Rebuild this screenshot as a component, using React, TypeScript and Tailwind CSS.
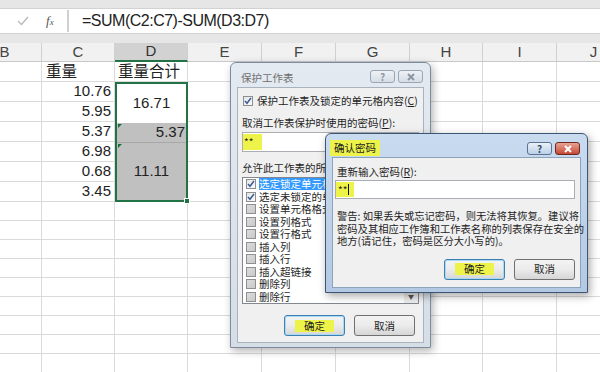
import React from "react";

const cols = ["B", "C", "D", "E", "F", "G", "H", "I", "J"];
const weights: Record<number, string> = { 2: "10.76", 3: "5.95", 4: "5.37", 5: "6.98", 6: "0.68", 7: "3.45" };

const Check = ({ on, gray }: { on?: boolean; gray?: boolean }) => (
  <span
    className={`w-[10px] h-[10px] border border-[#8e8f8f] flex items-center justify-center shrink-0 ${
      gray ? "bg-linear-to-br from-[#dcdcdc] to-[#c9c9c9]" : "bg-linear-to-br from-[#e6e6e6] to-[#fafafa]"
    }`}
  >
    {on && (
      <svg width="8" height="8" viewBox="0 0 8 8">
        <path d="M1 4 L3 6.3 L7 1" stroke="#3a5d9a" strokeWidth="1.5" fill="none" />
      </svg>
    )}
  </span>
);

const Btn = ({ label, def, hl }: { label: string; def?: boolean; hl?: boolean }) => (
  <div
    className={`w-[61px] h-[21px] rounded-[3px] border flex items-center justify-center leading-[12px] bg-linear-to-b from-[#f4f4f4] via-[#ebebeb] to-[#d6d6d6] ${
      def ? "border-[#3c7fb1] shadow-[inset_0_0_0_1px_#a9d9f5]" : "border-[#707070]"
    }`}
  >
    <span className={hl ? "bg-[#eef34a] px-[9px]" : ""}>{label}</span>
  </div>
);

const HelpBtn = ({ active }: { active?: boolean }) => (
  <div
    className={`w-[25px] h-[13px] rounded-[3px] border flex items-center justify-center text-[10px] font-bold leading-none ${
      active
        ? "border-[#5d7391] bg-linear-to-b from-[#e9f1fa] to-[#bcd0e8] text-[#3b4c63]"
        : "border-[#9aa6b4] bg-linear-to-b from-[#eef2f6] to-[#d6dde6] text-[#8c97a4]"
    }`}
  >
    ?
  </div>
);

const CloseBtn = ({ active }: { active?: boolean }) => (
  <div
    className={`w-[25px] h-[13px] rounded-[3px] border flex items-center justify-center ${
      active
        ? "border-[#6e2a22] bg-linear-to-b from-[#e9a393] to-[#c54534]"
        : "border-[#9aa6b4] bg-linear-to-b from-[#eef2f6] to-[#d6dde6]"
    }`}
  >
    <svg width="10" height="8" viewBox="0 0 10 8">
      <path d="M2 1 L8 7 M8 1 L2 7" stroke={active ? "#ffffff" : "#8c97a4"} strokeWidth="2" />
    </svg>
  </div>
);

const Tri = () => (
  <span className="absolute left-[1px] top-[1px] w-0 h-0 border-t-[4px] border-t-[#1e6b3f] border-r-[4px] border-r-transparent" />
);

function DBlock() {
  return (
    <div className="row-span-6 border-2 border-[#217346] flex flex-col relative text-[15px] text-[#222]">
      <div className="h-[39px] bg-white flex items-center justify-center">16.71</div>
      <div className="h-[20px] bg-[#c0c0c0] border-b border-[#a8a8a8] flex items-center justify-end pr-[1px] relative">
        <Tri />
        5.37
      </div>
      <div className="flex-1 bg-[#c0c0c0] flex items-center justify-center relative">
        <Tri />
        11.11
      </div>
      <span className="absolute -right-[4px] -bottom-[4px] w-[6px] h-[6px] bg-[#217346] border border-white" />
    </div>
  );
}

function Sheet() {
  const cells: React.ReactNode[] = [];
  cols.forEach((c) =>
    cells.push(
      <div
        key={"h" + c}
        className={`flex items-center justify-center text-[15px] border-r border-[#d0d0d0] ${
          c === "D" ? "bg-[#d2d2d2] text-[#333] border-b-2 border-b-[#217346]" : "bg-[#f1f1f1] text-[#444] border-b border-b-[#c8c8c8]"
        }`}
      >
        {c}
      </div>
    )
  );
  for (let r = 1; r <= 16; r++) {
    for (let i = 0; i < 9; i++) {
      if (i === 2 && r >= 2 && r <= 7) {
        if (r === 2) cells.push(<DBlock key="dblock" />);
        continue;
      }
      let content: React.ReactNode = null;
      let align = "";
      if (r === 1 && i === 1) {
        content = "重量";
        align = "justify-start pl-[4px] text-[15.5px]";
      } else if (r === 1 && i === 2) {
        content = "重量合计";
        align = "justify-start pl-[3px] text-[15.5px]";
      } else if (i === 1 && weights[r]) {
        content = weights[r];
        align = "justify-end pr-[3px] text-[15px]";
      }
      cells.push(
        <div key={`${r}-${i}`} className={`flex items-center border-r border-b border-[#dadada] bg-white text-[#222] ${align}`}>
          {content}
        </div>
      );
    }
  }
  return (
    <div className="ml-[-32px] grid grid-cols-[74px_73px_73px_74px_74px_74px_73px_74px_74px] grid-rows-[19px_repeat(7,20px)_repeat(9,19px)]">
      {cells}
    </div>
  );
}

const listItems = ["选定锁定单元格", "选定未锁定的单元格", "设置单元格格式", "设置列格式", "设置行格式", "插入列", "插入行", "插入超链接", "删除列", "删除行"];

function ProtectDialog() {
  return (
    <div className="absolute left-[230px] top-[62px] w-[201px] h-[286px] rounded-t-[6px] border border-[#7d8b9b] bg-linear-to-b from-[#e4eaf1] to-[#d5dde7] px-[6px] pb-[4px] flex flex-col shadow-[2px_3px_8px_rgba(0,0,0,0.3)]">
      <div className="h-[24px] flex items-start justify-between">
        <span className="pt-[9px] pl-[4px] text-[#6f6f6f] leading-[12px]">保护工作表</span>
        <div className="flex gap-[3px] pt-[7px] mr-[1px]">
          <HelpBtn />
          <CloseBtn />
        </div>
      </div>
      <div className="flex-1 bg-[#f0f0f0] border border-[#a9b3be] px-[4px] flex flex-col">
        <div className="h-[14px] mt-[6px] flex items-center gap-[4px] ml-[1px]">
          <Check on />
          <span className="whitespace-nowrap">保护工作表及锁定的单元格内容(<u>C</u>)</span>
        </div>
        <div className="h-[14px] mt-[8px] flex items-center whitespace-nowrap">
          取消工作表保护时使用的密码(<u>P</u>):
        </div>
        <div className="h-[20px] mt-[2px] bg-white border border-[#abadb3] flex items-center">
          <span className="bg-[#eef34a] h-[16px] w-[19px] text-[10px] leading-[16px] pl-[1px]">**</span>
        </div>
        <div className="h-[14px] mt-[9px] flex items-center whitespace-nowrap">允许此工作表的所有用户进行:</div>
        <div className="h-[127px] mt-[2px] bg-white border border-[#828790] flex">
          <div className="flex-1 flex flex-col pl-[3px]">
            {listItems.map((t, i) => (
              <div key={t} className="h-[12.6px] flex items-center gap-[3px]">
                <Check on={i < 2} gray={i >= 2} />
                <span className={`whitespace-nowrap leading-[12px] flex-1 ${i === 0 ? "bg-[#3399ff] text-white" : ""}`}>{t}</span>
              </div>
            ))}
          </div>
          <div className="w-[14px] bg-[#ececec] flex flex-col justify-end">
            <div className="h-[12px] flex items-center justify-center text-[6px] leading-[6px] text-[#555]">▼</div>
          </div>
        </div>
        <div className="mt-[11px] flex justify-end gap-[9px] pr-[4px]">
          <Btn label="确定" def hl />
          <Btn label="取消" />
        </div>
      </div>
    </div>
  );
}

function ConfirmDialog() {
  return (
    <div className="absolute left-[325px] top-[133px] w-[263px] h-[160px] rounded-t-[6px] border border-[#3d5573] bg-linear-to-b from-[#c9dbef] to-[#b3c9e3] px-[6px] pb-[4px] flex flex-col shadow-[2px_3px_8px_rgba(0,0,0,0.35)]">
      <div className="h-[23px] flex items-start justify-between">
        <span className="mt-[6px] ml-[-2px] px-[4px] h-[16px] leading-[16px] bg-[#eef34a] text-[#222]">确认密码</span>
        <div className="flex gap-[3px] pt-[8px] mr-[1px]">
          <HelpBtn active />
          <CloseBtn active />
        </div>
      </div>
      <div className="flex-1 bg-[#f0f0f0] border border-[#8da2bb] pl-[2px] pr-[5px] flex flex-col">
        <div className="h-[14px] mt-[7px] ml-[2px] flex items-center whitespace-nowrap">
          重新输入密码(<u>R</u>):
        </div>
        <div className="h-[19px] mt-[1px] bg-white border border-[#abadb3] flex items-center">
          <span className="bg-[#eef34a] h-[15px] w-[18px] text-[10px] leading-[15px] pl-[2px] flex items-center">
            **<span className="w-[1px] h-[11px] bg-[#111] ml-[1px]" />
          </span>
        </div>
        <div className="mt-[11px] ml-[2px] leading-[12.5px] text-[10.3px] whitespace-nowrap">
          <div>警告: 如果丢失或忘记密码，则无法将其恢复。建议将</div>
          <div>密码及其相应工作簿和工作表名称的列表保存在安全的</div>
          <div>地方(请记住，密码是区分大小写的)。</div>
        </div>
        <div className="mt-[11px] flex justify-end gap-[9px]">
          <Btn label="确定" def hl />
          <Btn label="取消" />
        </div>
      </div>
    </div>
  );
}

export default function App() {
  return (
    <div className="relative w-[600px] h-[372px] overflow-hidden bg-white font-['Liberation_Sans','Noto_Sans_CJK_SC',sans-serif]">
      <div className="h-[8px] bg-[#e6e6e6]" />
      <div className="h-[26px] flex bg-white border-y border-[#d2d2d2]">
        <div className="w-[67px] flex items-center">
          <svg className="ml-[17px]" width="12" height="10" viewBox="0 0 12 10">
            <path d="M1 5 L4.5 8.5 L11 1" stroke="#b9b9b9" strokeWidth="1.4" fill="none" />
          </svg>
          <span className="ml-[17px] font-['Liberation_Serif',serif] italic text-[13px] text-[#555]">
            f<span className="text-[9px]">x</span>
          </span>
        </div>
        <div className="w-[2px] bg-[#d0d0d0] my-[1px]" />
        <div className="flex-1 flex items-center pl-[13px] text-[16px] tracking-[-0.5px] text-[#222]">
          =SUM(C2:C7)-SUM(D3:D7)
        </div>
      </div>
      <div className="h-[9px] bg-[#e6e6e6]" />
      <Sheet />
      <div className="font-['Noto_Sans_CJK_SC',sans-serif] text-[10.5px] leading-[14px] text-[#1e1e1e]">
        <ProtectDialog />
        <ConfirmDialog />
      </div>
    </div>
  );
}
